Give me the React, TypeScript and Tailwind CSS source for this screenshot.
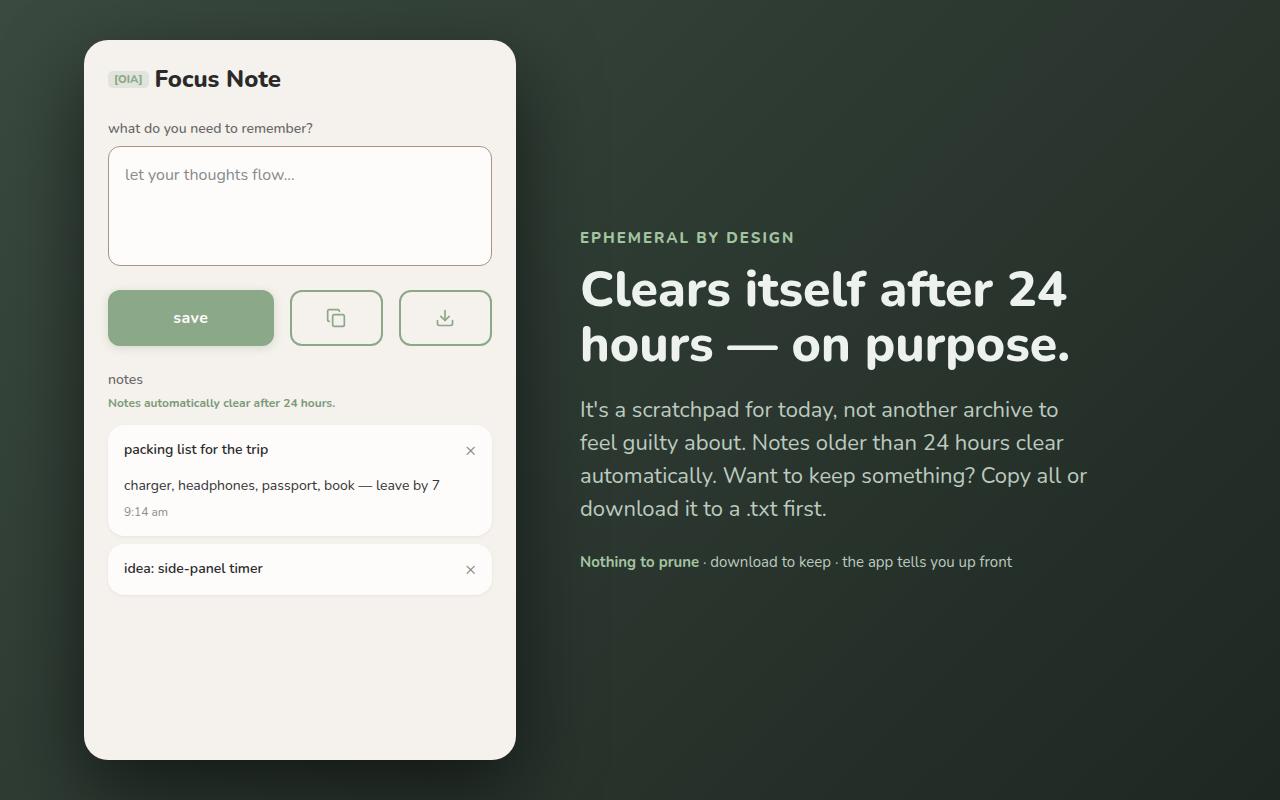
import { useState } from "react";
import { Copy } from "lucide-react";

type Note = {
  id: number;
  title: string;
  body?: string;
  time?: string;
};

const initialNotes: Note[] = [
  {
    id: 1,
    title: "packing list for the trip",
    body: "charger, headphones, passport, book — leave by 7",
    time: "9:14 am",
  },
  { id: 2, title: "idea: side-panel timer" },
];

function DownloadIcon() {
  return (
    <svg
      width="20"
      height="20"
      viewBox="0 0 24 24"
      fill="none"
      stroke="currentColor"
      strokeWidth="2"
      strokeLinecap="round"
      strokeLinejoin="round"
      aria-hidden="true"
    >
      <path d="M21 15v4a2 2 0 0 1-2 2H5a2 2 0 0 1-2-2v-4" />
      <path d="M7 10l5 5 5-5" />
      <path d="M12 15V3" />
    </svg>
  );
}

function NoteCard({ note, onRemove }: { note: Note; onRemove: () => void }) {
  return (
    <li className="rounded-2xl bg-[#fdfcfb] p-4 shadow-[0_1px_3px_rgba(0,0,0,0.06)]">
      <div className="flex items-start justify-between">
        <h3 className="text-sm leading-[18px] font-semibold text-[#2a2a2a]">{note.title}</h3>
        <button
          type="button"
          aria-label={`Remove ${note.title}`}
          onClick={onRemove}
          className="text-lg leading-[19px] text-[#888]"
        >
          ×
        </button>
      </div>
      {note.body && <p className="mt-4 text-sm leading-[19px] text-[#333]">{note.body}</p>}
      {note.time && <p className="mt-[9px] text-xs leading-4 text-[#8c8c8c]">{note.time}</p>}
    </li>
  );
}

export default function App() {
  const [text, setText] = useState("");
  const [notes, setNotes] = useState(initialNotes);

  const save = () => {
    const title = text.trim();
    if (!title) return;
    setNotes([{ id: Date.now(), title }, ...notes]);
    setText("");
  };

  return (
    <main className="flex min-h-screen gap-16 bg-[linear-gradient(135deg,#3a4a40_0%,#2d3a32_44%,#1f2722_100%)] px-[84px] py-10 font-[Nunito,Lato,sans-serif]">
      <section className="w-full max-w-[432px] shrink-0 rounded-3xl bg-[#f5f1ec] p-6 shadow-[0_30px_80px_rgba(0,0,0,0.55)]">
        <header className="flex items-center gap-1.5">
          <span className="rounded-[5px] bg-[#e1e4dc] px-1.5 text-[11px] leading-[17px] font-extrabold text-[#8ba888]">
            [OIA]
          </span>
          <h1 className="text-2xl leading-[30px] font-extrabold text-[#2a2a2a]">Focus Note</h1>
        </header>

        <label htmlFor="note" className="mt-6 block text-sm leading-[22px] font-medium text-[#666]">
          what do you need to remember?
        </label>
        <textarea
          id="note"
          value={text}
          onChange={(e) => setText(e.target.value)}
          placeholder="let your thoughts flow..."
          className="mt-1.5 block h-[120px] w-full resize-none rounded-xl border border-[#a89484] bg-[#fdfcfb] p-4 text-base leading-6 text-[#2a2a2a] outline-none placeholder:text-[#8a8a8a]"
        />

        <div className="mt-6 grid h-14 grid-cols-[16fr_9fr_9fr] gap-4">
          <button
            type="button"
            onClick={save}
            className="rounded-xl bg-[#8ba888] text-base font-bold tracking-wide text-[#fdfcfb] shadow-[0_2px_8px_rgba(139,168,136,0.3)]"
          >
            save
          </button>
          <button
            type="button"
            aria-label="Copy all"
            className="flex items-center justify-center rounded-xl border-2 border-[#8ba888] text-[#8ba888]"
          >
            <Copy size={20} />
          </button>
          <button
            type="button"
            aria-label="Download"
            className="flex items-center justify-center rounded-xl border-2 border-[#8ba888] text-[#8ba888]"
          >
            <DownloadIcon />
          </button>
        </div>

        <h2 className="mt-6 text-sm leading-5 font-medium text-[#666]">notes</h2>
        <p className="mt-1 text-xs leading-[19px] font-bold text-[#7a9a7a]">
          Notes automatically clear after 24 hours.
        </p>
        <ul className="mt-3 flex flex-col gap-2">
          {notes.map((note) => (
            <NoteCard
              key={note.id}
              note={note}
              onRemove={() => setNotes(notes.filter((n) => n.id !== note.id))}
            />
          ))}
        </ul>
      </section>

      <section className="flex max-w-[520px] flex-col justify-center">
        <p className="text-[15px] leading-5 font-extrabold tracking-[2px] text-[#a3c4a0] uppercase">
          Ephemeral by design
        </p>
        <h2 className="mt-3.5 text-[50px] leading-[55px] font-extrabold text-[#eef2ee]">
          Clears itself after 24 hours — on purpose.
        </h2>
        <p className="mt-[22px] text-[22px] leading-[33px] text-[#bccabf]">
          It's a scratchpad for today, not another archive to feel guilty about. Notes older than 24 hours clear
          automatically. Want to keep something? Copy all or download it to a .txt first.
        </p>
        <p className="mt-[26px] text-[15px] leading-5 text-[#bccabf]">
          <strong className="font-bold text-[#a3c4a0]">Nothing to prune</strong> · download to keep · the app tells you
          up front
        </p>
      </section>
    </main>
  );
}
